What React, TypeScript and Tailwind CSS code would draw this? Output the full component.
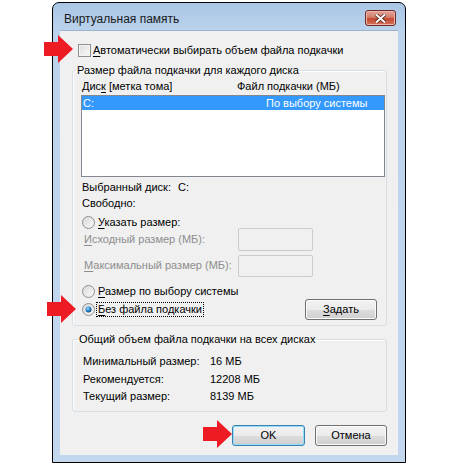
import React from "react"

const FONT = { fontFamily: '"Liberation Sans", Arial, sans-serif' }

const Arrow = ({ className }: { className: string }) => (
  <svg className={className} width="29" height="28" viewBox="0 0 29 28">
    <polygon points="0,7 14,7 14,0 29,14 14,28 14,21 0,21" fill="#ed1c24" />
  </svg>
)

const Radio = ({ checked = false }: { checked?: boolean }) => (
  <svg width="13" height="13" viewBox="0 0 13 13" className="shrink-0">
    <defs>
      <linearGradient id="rb" x1="0" y1="0" x2="1" y2="1">
        <stop offset="0" stopColor="#d8d8d8" />
        <stop offset="1" stopColor="#fafafa" />
      </linearGradient>
      <radialGradient id="rd" cx="0.4" cy="0.35" r="0.7">
        <stop offset="0" stopColor="#9fe4ff" />
        <stop offset="0.5" stopColor="#2a8ad4" />
        <stop offset="1" stopColor="#0d3d6e" />
      </radialGradient>
    </defs>
    <circle cx="6.5" cy="6.5" r="6" fill="url(#rb)" stroke="#8e8f8f" strokeWidth="1" />
    {checked && <circle cx="6.5" cy="6.5" r="3" fill="url(#rd)" />}
  </svg>
)

const Btn = ({ children, main = false, className = "" }: any) => (
  <div
    className={`h-[21px] shrink-0 flex items-center justify-center rounded-[3px] border text-black ${
      main
        ? "border-[#3c7fb1] shadow-[inset_0_0_0_1px_#8fe0fa]"
        : "border-[#707070] shadow-[inset_0_0_0_1px_#fbfbfb]"
    } bg-[linear-gradient(#f2f2f2_0%,#ebebeb_50%,#dddddd_51%,#cfcfcf_100%)] ${className}`}
  >
    {children}
  </div>
)

const U = ({ children }: any) => <span className="underline underline-offset-[2px]">{children}</span>

export default function App() {
  return (
    <div className="relative w-[460px] h-[464px] bg-white text-[11px] leading-[15px] text-black overflow-hidden whitespace-nowrap" style={FONT}>
      <div className="pl-[52px] pt-[2px]">
        <div className="w-[354px] h-[461px] border border-black rounded-t-[7px] bg-[linear-gradient(180deg,#a9c6e6_0px,#bcd3ec_30px,#c3d8ef_100%)] flex flex-col">
          {/* title bar */}
          <div className="h-[27px] shrink-0 flex items-start pl-[11px] pr-[9px]">
            <div className="mt-[9px] text-[12px] text-[#1a1a1a]">Виртуальная память</div>
            <div className="ml-auto mt-[7px] w-[31px] h-[16px] rounded-[3px] border border-[#6d2a27] bg-[linear-gradient(#e4a398_0%,#d37e6e_45%,#c2472f_55%,#d7755c_100%)] flex items-center justify-center shadow-[inset_0_0_0_1px_#eeb6aa]">
              <svg width="11" height="9" viewBox="0 0 11 9">
                <path d="M1 0.5 L5.5 4.5 L10 0.5 M1 8.5 L5.5 4.5 L10 8.5" stroke="#4a1c18" strokeWidth="3.4" fill="none" />
                <path d="M1 0.5 L5.5 4.5 L10 0.5 M1 8.5 L5.5 4.5 L10 8.5" stroke="#ffffff" strokeWidth="2" fill="none" />
              </svg>
            </div>
          </div>

          {/* client */}
          <div className="mx-[7px] h-[425px] shrink-0 bg-[#f0f0f0] border-t border-[#9cb3cc] flex flex-col pt-[12px]">
            <div className="flex items-center h-[15px] pl-[18px]">
              <div className="w-[13px] h-[13px] shrink-0 border border-[#8e8f8f] bg-[linear-gradient(135deg,#dcdcdc,#f9f9f9)] shadow-[inset_0_0_0_1px_#f4f4f4]" />
              <div className="ml-[2px]">
                <U>А</U>втоматически выбирать объем файла подкачки
              </div>
            </div>

            {/* group 1 */}
            <fieldset className="ml-[12px] w-[315px] mt-[5px] border border-[#d5dfe5] rounded-[3px] shadow-[inset_1px_1px_0_#fff] pl-[8px] pr-[1px] pb-[5px]">
              <legend className="ml-[-5px] px-[1px]">Размер файла подкачки для каждого диска</legend>
              <div className="flex mt-[1px] h-[15px]">
                <div className="pl-[1px] w-[156px] shrink-0">
                  Дис<U>к</U> [метка тома]
                </div>
                <div>Файл подкачки (МБ)</div>
              </div>
              <div className="mt-[1px] h-[82px] border border-[#828790] bg-white">
                <div className="h-[14px] bg-[#3399ff] text-white flex items-center pl-[1px]">
                  <div className="w-[183px] shrink-0">C:</div>
                  <div>По выбору системы</div>
                </div>
              </div>
              <div className="mt-[3px] pl-[1px] flex">
                <div className="w-[96px] shrink-0">Выбранный диск:</div>
                <div>C:</div>
              </div>
              <div className="mt-[1px] pl-[1px]">Свободно:</div>

              <div className="mt-[4px] flex items-center h-[15px] pl-[1px] gap-[3px]">
                <Radio />
                <div>
                  <U>У</U>казать размер:
                </div>
              </div>
              <div className="-mt-[2px] flex items-center h-[23px] pl-[3px] text-[#8d8d8d]">
                <div className="w-[154px] shrink-0">
                  <U>И</U>сходный размер (МБ):
                </div>
                <div className="w-[75px] h-[23px] shrink-0 border border-[#c9cbcd] rounded-[2px] bg-[#f0f0f0]" />
              </div>
              <div className="mt-[3px] flex items-center h-[23px] pl-[3px] text-[#8d8d8d]">
                <div className="w-[154px] shrink-0">
                  <U>М</U>аксимальный размер (МБ):
                </div>
                <div className="w-[75px] h-[22px] shrink-0 border border-[#c9cbcd] rounded-[2px] bg-[#f0f0f0]" />
              </div>

              <div className="mt-[7px] flex items-center h-[15px] pl-[1px] gap-[3px]">
                <Radio />
                <div>
                  <U>Р</U>азмер по выбору системы
                </div>
              </div>
              <div className="flex items-center justify-between pr-[8px]">
                <div className="flex items-center h-[15px] pl-[1px] gap-[1px]">
                  <Radio checked />
                  <div className="border border-dotted border-black px-[1px] leading-[13px]">
                    <U>Б</U>ез файла подкачки
                  </div>
                </div>
                <Btn className="w-[72px]">
                  <span>
                    <U>З</U>адать
                  </span>
                </Btn>
              </div>
            </fieldset>

            {/* group 2 */}
            <fieldset className="ml-[12px] w-[315px] mt-[6px] border border-[#d5dfe5] rounded-[3px] shadow-[inset_1px_1px_0_#fff] pl-[10px] pb-[5px]">
              <legend className="ml-[-5px] px-[1px]">Общий объем файла подкачки на всех дисках</legend>
              <div className="mt-[6px] flex flex-col leading-[17.5px]">
                <div className="flex">
                  <div className="w-[127px] shrink-0">Минимальный размер:</div>
                  <div>16 МБ</div>
                </div>
                <div className="flex">
                  <div className="w-[127px] shrink-0">Рекомендуется:</div>
                  <div>12208 МБ</div>
                </div>
                <div className="flex">
                  <div className="w-[127px] shrink-0">Текущий размер:</div>
                  <div>8139 МБ</div>
                </div>
              </div>
            </fieldset>

            <div className="mt-[13px] flex justify-end gap-[10px] pr-[11px]">
              <Btn main className="w-[73px]">OK</Btn>
              <Btn className="w-[72px]">Отмена</Btn>
            </div>
          </div>
        </div>
      </div>

      <Arrow className="absolute left-[44px] top-[35px]" />
      <Arrow className="absolute left-[47px] top-[295px]" />
      <Arrow className="absolute left-[203px] top-[420px]" />
    </div>
  )
}
